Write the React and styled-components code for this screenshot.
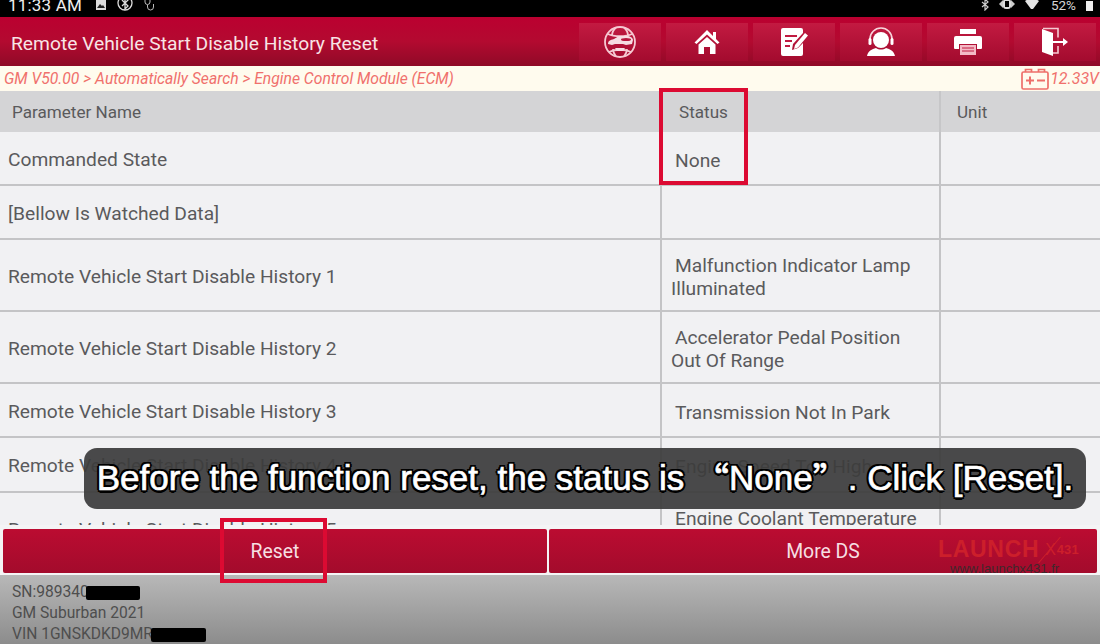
import React from 'react';
import styled, { createGlobalStyle } from 'styled-components';

const Global = createGlobalStyle`
  html, body { margin: 0; padding: 0; background: #000; }
  body { font-family: Roboto, "Liberation Sans", sans-serif; }
  * { box-sizing: border-box; }
`;

const rows = [
  { name: 'Commanded State', status: 'None', height: 54 },
  { name: '[Bellow Is Watched Data]', status: '', height: 54 },
  { name: 'Remote Vehicle Start Disable History 1', status: 'Malfunction Indicator Lamp Illuminated', height: 72 },
  { name: 'Remote Vehicle Start Disable History 2', status: 'Accelerator Pedal Position Out Of Range', height: 72 },
  { name: 'Remote Vehicle Start Disable History 3', status: 'Transmission Not In Park', height: 54 },
  { name: 'Remote Vehicle Start Disable History 4', status: 'Engine Speed Too High', height: 55 },
  { name: 'Remote Vehicle Start Disable History 5', status: 'Engine Coolant Temperature Out Of Range', height: 72 },
];

const GlobeIcon = () => (
  <svg width="34" height="34" viewBox="0 0 34 34" fill="none" stroke="#f6c9d2" strokeWidth="1.8">
    <circle cx="17" cy="17" r="15" />
    <path d="M5 9c6 3 18 3 24 0M6 27c6-3 16-3 22 0M13 2.500C10 5 9 8 9 11M21 2.500c3 2.500 4 5 4 8.500M10 24c0 3 1 5 3 7.500M24 24c0 3-1 5-3 7.500" />
    <path d="M5 19c0-3 2-4 6-5l5-3h8c3 0 6 2 6 4l-1 4-6 1-3-1H12l-3 1z" fill="#f6dce2" stroke="none" />
    <ellipse cx="23" cy="14.500" rx="5" ry="1.500" fill="#b5173d" stroke="none" />
    <path d="M12 23h10l-2 3h-6z" fill="#f6dce2" stroke="none" />
  </svg>
);

const HomeIcon = () => (
  <svg width="26" height="26" viewBox="0 0 26 26" fill="#fff">
    <path d="M13 1L0.500 13.500 2.500 15 13 5.500 23.500 15l2-1.500-3.500-3.500V3h-3v4z" />
    <path d="M4.500 15.500L13 8l8.500 7.500V25H16v-7h-6v7H4.500z" />
  </svg>
);

const EditIcon = () => (
  <svg width="30" height="30" viewBox="0 0 30 30">
    <path d="M2 3a2 2 0 0 1 2-2h18a2 2 0 0 1 2 2v3L14 17l-1 6 6-2 5-5v11a2 2 0 0 1-2 2H4a2 2 0 0 1-2-2z" fill="#fff" />
    <path d="M6 9h12M6 14h7M6 19h5" stroke="#c01a40" strokeWidth="1.800" />
    <path d="M16 18L26 6l3 2.500-10 12-4 1.500z" fill="#fff" />
  </svg>
);

const AgentIcon = () => (
  <svg width="30" height="30" viewBox="0 0 30 30" fill="none">
    <path d="M4 15V12a11 11 0 0 1 22 0v3" stroke="#f8d5dc" strokeWidth="1.600" />
    <rect x="2.500" y="11" width="3" height="7" rx="1.500" fill="#fff" />
    <rect x="24.500" y="11" width="3" height="7" rx="1.500" fill="#fff" />
    <circle cx="15" cy="13" r="8" fill="#fff" />
    <path d="M1 29c1-5 5-7 9-8 3 2 7 2 10 0 4 1 8 3 9 8z" fill="#fff" />
  </svg>
);

const PrinterIcon = () => (
  <svg width="28" height="28" viewBox="0 0 28 28">
    <rect x="6" y="1" width="16" height="5" fill="#fff" />
    <path d="M2 8h24a2 2 0 0 1 2 2v10a1 1 0 0 1-1 1h-4v-5H5v5H1a1 1 0 0 1-1-1V10a2 2 0 0 1 2-2z" fill="#fff" />
    <rect x="6" y="17" width="16" height="10" fill="#f3b9c5" />
    <path d="M8 20h12M8 23h12" stroke="#c01a40" strokeWidth="1" />
  </svg>
);

const ExitIcon = () => (
  <svg width="28" height="30" viewBox="0 0 28 30" fill="none">
    <path d="M1 2l11 4v23L1 25z" fill="#fff" />
    <path d="M2 1.500h15v9M17 19v7h-5" stroke="#f6c9d2" strokeWidth="1.600" />
    <path d="M12 15h11" stroke="#fff" strokeWidth="2" />
    <path d="M22 11l5 4-5 4z" fill="#fff" />
  </svg>
);

const BatteryIcon = () => (
  <svg width="28" height="22" viewBox="0 0 28 22" fill="none" stroke="#ee6f6a" strokeWidth="1.700">
    <rect x="1" y="4" width="26" height="17" rx="1.500" />
    <path d="M4.500 4V1.500h6V4M17.500 4V1.500h6V4" />
    <path d="M5 12.500h8M9 8.500v8M16 12.500h8" strokeWidth="2" />
  </svg>
);

const App = () => (
  <>
    <Global />
    <Page>
      <StatusBar>
        <StatusGroup>
          <Clock>11:33 AM</Clock>
          <svg width="12" height="11" viewBox="0 0 12 11"><path d="M1 0h10v10H1z" fill="#ddd" /><path d="M2 8l3-4 2 2 1-1 2 3z" fill="#222" /></svg>
          <svg width="16" height="14" viewBox="0 0 16 14" fill="none" stroke="#ddd" strokeWidth="1.300"><circle cx="8" cy="5" r="7" /><path d="M5 2l6 6-3 3V-1l3 3-6 6" /></svg>
          <svg width="12" height="12" viewBox="0 0 12 12" fill="none" stroke="#bbb" strokeWidth="1"><path d="M2 0v3a2.500 2.500 0 0 0 5 0V0M4.500 6v2a3 3 0 0 0 6 0V5" /></svg>
        </StatusGroup>
        <StatusGroup>
          <svg width="8" height="12" viewBox="0 0 8 12" fill="none" stroke="#ccc" strokeWidth="1.200"><path d="M1 3l6 5-3 3V0l3 3-6 5" /></svg>
          <svg width="16" height="12" viewBox="0 0 16 12"><path d="M0 5l4-4v8zM16 5l-4-4v8z" fill="#ccc" /><rect x="4" y="0" width="8" height="10" rx="3" fill="#ddd" /><rect x="6" y="2" width="4" height="6" fill="#000" /></svg>
          <svg width="14" height="12" viewBox="0 0 14 12"><path d="M0 2c4-3 10-3 14 0L8 10H6z" fill="#e5e5e5" /></svg>
          <Percent>52%</Percent>
          <svg width="7" height="11" viewBox="0 0 7 11"><path d="M0 1h7v10H0z" fill="#eee" /></svg>
        </StatusGroup>
      </StatusBar>

      <Header>
        <Title>Remote Vehicle Start Disable History Reset</Title>
        <Toolbar>
          <ToolButton><GlobeIcon /></ToolButton>
          <ToolButton><HomeIcon /></ToolButton>
          <ToolButton><EditIcon /></ToolButton>
          <ToolButton><AgentIcon /></ToolButton>
          <ToolButton><PrinterIcon /></ToolButton>
          <ToolButton><ExitIcon /></ToolButton>
        </Toolbar>
      </Header>

      <Breadcrumb>
        <span>GM V50.00 &gt; Automatically Search &gt; Engine Control Module (ECM)</span>
        <Voltage><BatteryIcon />12.33V</Voltage>
      </Breadcrumb>

      <TableHead>
        <HeadCell $pad={12}>Parameter Name</HeadCell>
        <HeadCell $pad={19}>Status</HeadCell>
        <HeadCell $pad={16} $line>Unit</HeadCell>
      </TableHead>

      <TableBody>
        {rows.map((row) => (
          <Row key={row.name} $height={row.height}>
            <NameCell>{row.name}</NameCell>
            <StatusCell>{row.status}</StatusCell>
            <UnitCell />
          </Row>
        ))}
      </TableBody>

      <ActionBar>
        <ActionButton>Reset</ActionButton>
        <ActionButton>More DS</ActionButton>
      </ActionBar>

      <Footer>
        <FooterLine>SN:989340<Redacted $width={54} $gap={-3} /></FooterLine>
        <FooterLine>GM Suburban 2021</FooterLine>
        <FooterLine>VIN 1GNSKDKD9MR<Redacted $width={55} $gap={-2} /></FooterLine>
      </Footer>

      <Highlight $left={659} $top={88} $width={89} $height={97} />
      <Highlight $left={220} $top={518} $width={107} $height={65} />

      <Subtitle>Before the function reset, the status is <Quote>“</Quote>None<Quote>”</Quote>. Click [Reset].</Subtitle>

      <Watermark>
        <Brand>LAUNCH<BrandSlash /><BrandX>X</BrandX><BrandSub>431</BrandSub></Brand>
        <Site>www.launchx431.fr</Site>
      </Watermark>
    </Page>
  </>
);

export default App;

const Page = styled.div`
  position: relative;
  width: 1100px;
  height: 644px;
  overflow: hidden;
  display: flex;
  flex-direction: column;
  background: #f1f1f3;
`;

const StatusBar = styled.div`
  flex: 0 0 17px;
  display: flex;
  justify-content: space-between;
  padding: 0 7px 7px 8px;
  background: #000;
`;

const StatusGroup = styled.div`
  display: flex;
  align-items: center;
  gap: 10px;
  height: 10px;
`;

const Clock = styled.span`
  color: #eee;
  font-size: 17px;
  line-height: 10px;
  letter-spacing: 0.2px;
  margin-right: 3px;
`;

const Percent = styled.span`
  color: #d5d5d5;
  font-size: 13.500px;
  line-height: 10px;
  margin-left: 2px;
`;

const Header = styled.header`
  flex: 0 0 49px;
  display: flex;
  align-items: center;
  justify-content: space-between;
  padding: 0 4px 0 11px;
  background: linear-gradient(#bb0030 0%, #b30a30 50%, #8f0a27 100%);
`;

const Title = styled.h1`
  margin: 3px 0 0;
  color: #f8e4e6;
  font-size: 19.250px;
  font-weight: 400;
`;

const Toolbar = styled.div`
  display: flex;
  gap: 5px;
`;

const ToolButton = styled.div`
  width: 82px;
  height: 38px;
  display: flex;
  align-items: center;
  justify-content: center;
  background: linear-gradient(#c31a41, #a30b2e);
`;

const Breadcrumb = styled.div`
  flex: 0 0 25px;
  display: flex;
  align-items: center;
  justify-content: space-between;
  padding: 0 1px 0 4px;
  background: #fffbee;
  color: #f0706c;
  font-size: 15.700px;
  font-style: italic;
`;

const Voltage = styled.span`
  display: flex;
  align-items: center;
  gap: 1px;
  font-size: 16px;
`;

const TableHead = styled.div`
  flex: 0 0 41px;
  display: grid;
  grid-template-columns: 660px 279px 1fr;
  background: #d4d4d6;
  color: #5a5a5c;
  font-size: 17.100px;
`;

const HeadCell = styled.div`
  display: flex;
  align-items: center;
  padding-left: ${(p) => p.$pad}px;
  border-left: ${(p) => (p.$line ? '2px solid #c6c6c8' : 'none')};
`;

const TableBody = styled.div`
  flex: 1;
  min-height: 0;
  overflow: hidden;
  color: #5a5a5c;
  font-size: 19.200px;
`;

const Row = styled.div`
  height: ${(p) => p.$height}px;
  display: grid;
  grid-template-columns: 660px 279px 1fr;
  border-bottom: 2px solid #c4c4c6;
`;

const NameCell = styled.div`
  display: flex;
  align-items: center;
  padding: 2px 0 0 8px;
`;

const StatusCell = styled.div`
  align-self: stretch;
  padding: 4px 20px 0 9px;
  border-left: 2px solid #c4c4c6;
  text-indent: 4px;
  line-height: 23px;
  display: flex;
  align-items: center;
`;

const UnitCell = styled.div`
  border-left: 2px solid #c4c4c6;
`;

const ActionBar = styled.div`
  flex: 0 0 50px;
  display: grid;
  grid-template-columns: 544px 548px;
  gap: 2px;
  padding: 4px 3px 2px;
  background: #f4f4f5;
`;

const ActionButton = styled.div`
  display: flex;
  align-items: center;
  justify-content: center;
  border-radius: 2px;
  background: linear-gradient(#bb0c31, #a30b2c);
  color: #f6dfe2;
  font-size: 19.400px;
`;

const Footer = styled.footer`
  flex: 0 0 69px;
  min-height: 0;
  overflow: hidden;
  padding: 7px 12px 0;
  background: linear-gradient(#b8b8b8, #8c8c8c);
  color: #4e4e4e;
  font-size: 15.600px;
  line-height: 21px;
`;

const FooterLine = styled.div`
  display: flex;
  align-items: center;
  height: 21px;
`;

const Redacted = styled.span`
  width: ${(p) => p.$width}px;
  height: 14px;
  margin-left: ${(p) => p.$gap}px;
  background: #000;
  border-radius: 2px;
`;

const Highlight = styled.div`
  position: absolute;
  left: ${(p) => p.$left}px;
  top: ${(p) => p.$top}px;
  width: ${(p) => p.$width}px;
  height: ${(p) => p.$height}px;
  border: 4px solid #dc0a32;
`;

const Subtitle = styled.div`
  position: absolute;
  left: 84px;
  top: 448px;
  width: 1002px;
  height: 61px;
  padding-bottom: 2px;
  display: flex;
  align-items: center;
  justify-content: center;
  white-space: pre;
  border-radius: 13px;
  background: rgba(60, 60, 60, 0.93);
  color: #fff;
  font-family: "Liberation Sans", Arial, sans-serif;
  font-size: 35px;
  -webkit-text-stroke: 0.7px #fff;
  text-shadow: 2.500px 0 0 #000, -2.500px 0 0 #000, 0 2.500px 0 #000, 0 -2.500px 0 #000,
    1.800px 1.800px 0 #000, -1.800px 1.800px 0 #000, 1.800px -1.800px 0 #000, -1.800px -1.800px 0 #000;
`;

const Quote = styled.span`
  font-family: "Noto Sans CJK SC", "Liberation Sans", sans-serif;
`;

const Watermark = styled.div`
  position: absolute;
  left: 938px;
  top: 537px;
  width: 150px;
`;

const Brand = styled.div`
  display: flex;
  align-items: center;
  color: #cc1f2b;
  font-family: "Liberation Sans", Arial, sans-serif;
  font-size: 23px;
  font-weight: 700;
  letter-spacing: 0.7px;
  height: 25px;
`;

const BrandSlash = styled.span`
  width: 1px;
  height: 34px;
  margin-left: 10px;
  background: #cc1f2b;
  transform: rotate(40deg);
`;

const BrandX = styled.span`
  margin-left: -5px;
  font-size: 16px;
  font-weight: 400;
`;

const BrandSub = styled.span`
  font-size: 13px;
  letter-spacing: 0.2px;
`;

const Site = styled.div`
  margin: 0 0 0 12px;
  color: #40282c;
  font-family: "Liberation Sans", Arial, sans-serif;
  font-size: 13px;
  line-height: 14px;
`;
